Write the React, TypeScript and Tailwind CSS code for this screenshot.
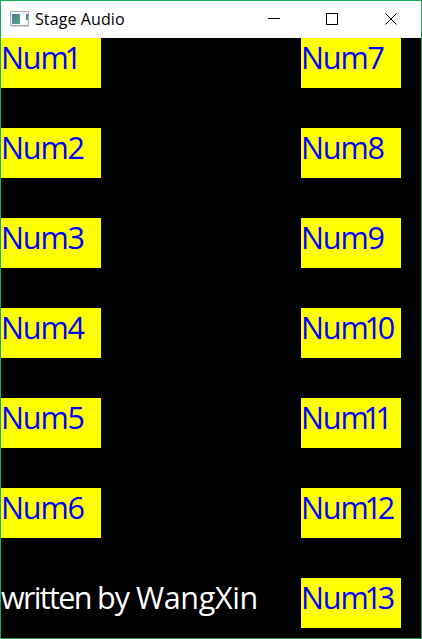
const left = ["1", "2", "3", "4", "5", "6"];
const right = ["7", "8", "9", "10", "11", "12", "13"];

function Label({ n }: { n: string }) {
  // The figure one sits tight against the letter before it.
  const startsWithOne = n.startsWith("1");
  return (
    <div className="h-[50px] w-[100px] shrink-0 whitespace-nowrap bg-[#ffff00] text-[30.5px] leading-[38px] tracking-[-1.1px] text-[#0000ff]">
      {startsWithOne ? (
        <>
          Nu<span className={n === "11" ? "tracking-[-5.5px]" : "tracking-[-4.2px]"}>m{n}</span>
        </>
      ) : (
        <>Num{n}</>
      )}
    </div>
  );
}

function AppIcon() {
  return (
    <svg width="20" height="17" viewBox="0 0 20 17" shapeRendering="crispEdges">
      <defs>
        <linearGradient id="pane" x1="0" y1="0" x2="1" y2="1">
          <stop offset="0" stopColor="#5277a0" />
          <stop offset="1" stopColor="#58ad78" />
        </linearGradient>
      </defs>
      <rect x="0.5" y="0.5" width="18" height="14" fill="#f3f4f5" stroke="#a7abb2" />
      <rect x="1" y="15" width="18" height="1" fill="#cfcfcf" />
      <rect x="2" y="3" width="8" height="10" fill="url(#pane)" />
      <rect x="11" y="3" width="4" height="10" fill="#fff" />
      <rect x="16" y="3" width="2" height="6" fill="url(#pane)" />
    </svg>
  );
}

export default function App() {
  return (
    <div className="flex h-[639px] w-[422px] flex-col overflow-hidden border border-[#18a955] bg-black font-['Open_Sans','Noto_Sans',sans-serif]">
      <header className="flex h-[37px] shrink-0 bg-white text-black">
        <div className="ml-[9px] mt-[10px] w-[20px] shrink-0">
          <AppIcon />
        </div>
        <div className="ml-[5px] mt-[6px] w-[110px] whitespace-nowrap text-[16px] leading-6 tracking-[0.1px]">
          Stage Audio
        </div>
        <svg className="ml-auto mr-[24px] mt-[12px]" width="130" height="13" viewBox="0 0 130 13" fill="none" stroke="#000">
          <path d="M1 5.5h12M59.5 .5h11v11h-11z" shapeRendering="crispEdges" />
          <path d="M118.5 .5l11 11M129.5 .5l-11 11" />
        </svg>
      </header>
      <main className="flex justify-between pr-[20px]">
        <div className="flex flex-col gap-10">
          {left.map((n) => (
            <Label key={n} n={n} />
          ))}
          <div className="h-[50px] w-[270px] whitespace-nowrap text-[30.5px] leading-[38px] tracking-[-1.02px] text-white">
            <span className="tracking-[-1.65px]">written </span>by <span className="tracking-[-0.35px]">WangXin</span>
          </div>
        </div>
        <div className="flex flex-col gap-10">
          {right.map((n) => (
            <Label key={n} n={n} />
          ))}
        </div>
      </main>
    </div>
  );
}
